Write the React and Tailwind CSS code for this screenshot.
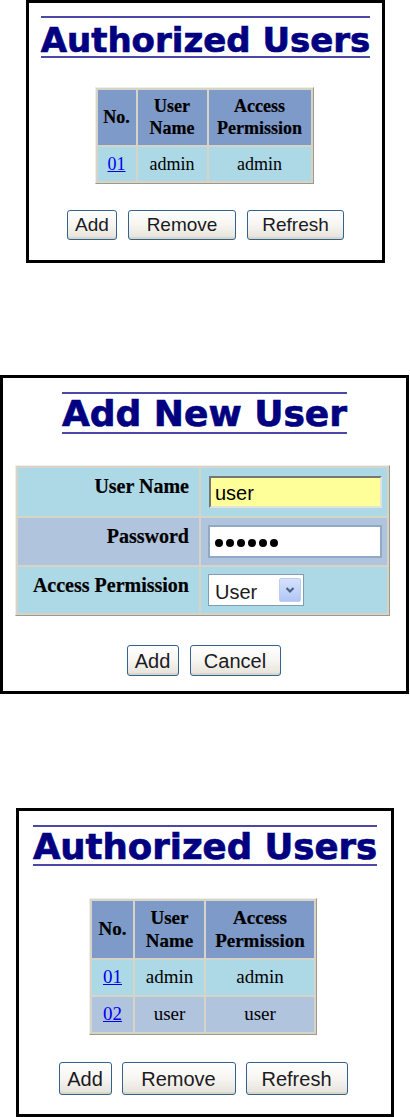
const TITLE = "inline-block border-y-2 border-[#4a4aa6] text-[#000080] font-bold font-['DejaVu_Sans',sans-serif] whitespace-nowrap [-webkit-text-stroke:0.7px_#000080]";
const TABLE = "table-fixed border-separate border-spacing-[2px] bg-[#d6d3c7] border border-t-[#efeee8] border-l-[#efeee8] border-r-[#9c998d] border-b-[#9c998d] font-['Liberation_Serif',serif] text-black";
const BTN = "rounded-[3px] border border-[#34628f] bg-linear-to-b from-white via-[#f6f5f1] to-[#e4e2d8] shadow-[inset_0_-2px_0_#d9d6cb] text-[#1c1a22] font-['Liberation_Sans',sans-serif] flex items-center justify-center";

function Title({ text, size, lead, pt }) {
  return (
    <h1 className={TITLE} style={{ fontSize: size, lineHeight: lead, paddingTop: pt }}>
      {text}
    </h1>
  );
}

function UsersTable({ rows, width, widths, fs, headH, rowH }) {
  return (
    <table className={TABLE} style={{ fontSize: fs, width }}>
      <colgroup>
        {widths.map((w, i) => <col key={i} style={{ width: w }} />)}
      </colgroup>
      <thead>
        <tr className="bg-[#7e9ac8]">
          {['No.', 'User Name', 'Access Permission'].map((h) => (
            <th
              key={h}
              className="p-0 font-bold text-center leading-[1.17] [-webkit-text-stroke:0.2px_#000]"
              style={{ height: headH }}
            >
              {h === 'No.' ? h : (
                <>
                  {h.split(' ')[0]}
                  <br />
                  {h.split(' ')[1]}
                </>
              )}
            </th>
          ))}
        </tr>
      </thead>
      <tbody>
        {rows.map((r, i) => (
          <tr key={r.no} className={i % 2 === 0 ? 'bg-[#add8e6]' : 'bg-[#b0c4de]'}>
            <td className="p-0 text-center" style={{ height: rowH }}>
              <a href="#" className="text-[#0000ee] underline">{r.no}</a>
            </td>
            <td className="p-0 text-center">{r.name}</td>
            <td className="p-0 text-center">{r.perm}</td>
          </tr>
        ))}
      </tbody>
    </table>
  );
}

function Buttons({ items, h, fs, gap }) {
  return (
    <div className="flex" style={{ gap }}>
      {items.map(([label, w]) => (
        <button key={label} className={BTN} style={{ width: w, height: h, fontSize: fs }}>
          {label}
        </button>
      ))}
    </div>
  );
}

function AddUserForm() {
  const label = "p-0 pr-[10px] pt-[7px] align-top text-right font-bold leading-[22px] whitespace-nowrap [-webkit-text-stroke:0.2px_#000]";
  return (
    <table className={TABLE + ' w-[375px] text-[20px]'}>
      <colgroup>
        <col className="w-[181px]" />
        <col />
      </colgroup>
      <tbody>
        <tr className="bg-[#add8e6]">
          <td className={label + ' h-[48px]'}>User Name</td>
          <td className="p-0 pl-[8px] align-middle">
            <input
              readOnly
              value="user"
              className="w-[173px] h-[32px] bg-[#ffff99] border-2 border-t-[#767676] border-l-[#767676] border-r-[#e3e2dc] border-b-[#e3e2dc] px-[4px] pt-[4px] text-[20px] font-['Liberation_Sans',sans-serif] text-black outline-none"
            />
          </td>
        </tr>
        <tr className="bg-[#b0c4de]">
          <td className={label + ' h-[47px]'}>Password</td>
          <td className="p-0 pl-[7px] align-middle">
            <div
              role="textbox"
              aria-label="Password"
              className="w-[174px] h-[33px] bg-white border-2 border-[#8fa9c7] pl-[5px] pt-[3px] flex items-center gap-[3px]"
            >
              {[0, 1, 2, 3, 4, 5].map((d) => (
                <span key={d} className="w-[8px] h-[8px] rounded-full bg-black" />
              ))}
            </div>
          </td>
        </tr>
        <tr className="bg-[#add8e6]">
          <td className={label + ' h-[46px]'}>Access Permission</td>
          <td className="p-0 pl-[7px] align-middle">
            <div className="w-[96px] h-[32px] bg-white border border-[#7f9db9] flex items-center justify-between pl-[6px] pr-[2px] font-['Liberation_Sans',sans-serif] text-[20px] text-[#1c1a22]">
              <span className="pt-[3px]">User</span>
              <span className="w-[22px] h-[24px] rounded-[2px] bg-linear-to-b from-[#d6e1fc] to-[#b2c6f6] border border-[#bccdf4] flex items-center justify-center">
                <svg width="10" height="8" viewBox="0 0 10 8">
                  <path d="M1.5 2 L5 5.5 L8.5 2" fill="none" stroke="#4d6185" strokeWidth="2.2" />
                </svg>
              </span>
            </div>
          </td>
        </tr>
      </tbody>
    </table>
  );
}

export default function App() {
  return (
    <div className="w-[410px] h-[1117px] bg-white flex flex-col overflow-hidden">
      {/* Authorized users (before) */}
      <section className="ml-[26px] w-[359px] h-[263px] border-[3px] border-black flex flex-col items-center">
        <div className="mt-[13px]">
          <Title text="Authorized Users" size="34px" lead="32px" pt="6px" />
        </div>
        <div className="mt-[29px] -ml-[3px]">
          <UsersTable
            rows={[{ no: '01', name: 'admin', perm: 'admin' }]}
            width="219px"
            widths={['38px', '69px', '102px']}
            fs="18px"
            headH="55px"
            rowH="34px"
          />
        </div>
        <div className="mt-[26px]">
          <Buttons items={[['Add', 50], ['Remove', 108], ['Refresh', 97]]} h={30} fs="19px" gap={11} />
        </div>
      </section>

      {/* Add new user */}
      <section className="mt-[112px] w-[409px] h-[319px] border-[3px] border-black flex flex-col items-center">
        <div className="mt-[14px]">
          <Title text="Add New User" size="36px" lead="36px" pt="2px" />
        </div>
        <div className="mt-[31px] -ml-[4px]">
          <AddUserForm />
        </div>
        <div className="mt-[29px] -ml-[2px]">
          <Buttons items={[['Add', 52], ['Cancel', 91]]} h={31} fs="20px" gap={11} />
        </div>
      </section>

      {/* Authorized users (after) */}
      <section className="mt-[114px] ml-[16px] w-[378px] h-[309px] border-[3px] border-black flex flex-col items-center">
        <div className="mt-[14px]">
          <Title text="Authorized Users" size="35.5px" lead="35px" pt="2px" />
        </div>
        <div className="mt-[32px] -ml-[4px]">
          <UsersTable
            rows={[
              { no: '01', name: 'admin', perm: 'admin' },
              { no: '02', name: 'user', perm: 'user' },
            ]}
            width="228px"
            widths={['41px', '69px', '108px']}
            fs="19px"
            headH="57px"
            rowH="35px"
          />
        </div>
        <div className="mt-[27px] -ml-[4px]">
          <Buttons items={[['Add', 53], ['Remove', 114], ['Refresh', 102]]} h={33} fs="20px" gap={10} />
        </div>
      </section>
    </div>
  );
}
